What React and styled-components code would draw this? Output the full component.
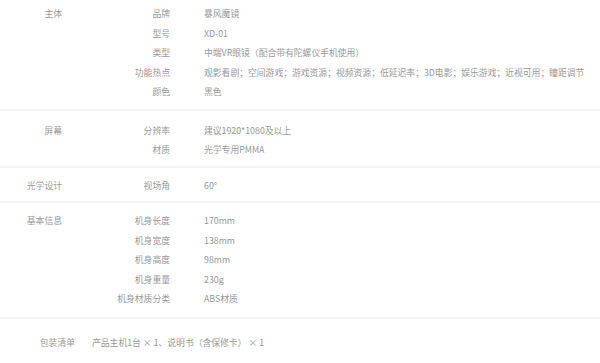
import { Fragment } from "react";
import styled, { createGlobalStyle } from "styled-components";

const GlobalStyle = createGlobalStyle`
  html, body {
    margin: 0;
    padding: 0;
    background: #ffffff;
  }
  body {
    font-family: "Noto Sans CJK SC", "Noto Sans", sans-serif;
    font-size: 8.8px;
    color: #999999;
  }
`;

const Page = styled.div`
  width: 600px;
  height: 363px;
  overflow: hidden;
  background: #fff;
`;

const Section = styled.section`
  display: grid;
  grid-template-columns: 62px 1fr;
  padding: ${(p) => p.pad || "8px 0 7px"};
  border-bottom: 2px solid #f3f3f3;
`;

const GroupName = styled.div`
  text-align: right;
  line-height: 19.5px;
  color: #999;
`;

const Rows = styled.dl`
  display: grid;
  grid-template-columns: 108px 1fr;
  column-gap: 34px;
  margin: 0;
`;

const Key = styled.dt`
  text-align: right;
  line-height: 19.5px;
  color: #999;
  white-space: nowrap;
`;

const Value = styled.dd`
  margin: 0;
  line-height: 19.5px;
  color: #999;
  white-space: nowrap;
`;

const PackRow = styled.div`
  display: flex;
  gap: 17px;
  padding: 14px 0 0;
  line-height: 19.5px;
`;

const PackLabel = styled.div`
  width: 75px;
  text-align: right;
  color: #999;
`;

const PackValue = styled.div`
  color: #999;
`;

const specs = [
  {
    name: "主体",
    pad: "4px 0 7px",
    rows: [
      ["品牌", "暴风魔镜"],
      ["型号", "XD-01"],
      ["类型", "中端VR眼镜（配合带有陀螺仪手机使用）"],
      [
        "功能热点",
        "观影看剧；空间游戏；游戏资源；视频资源；低延迟率；3D电影；娱乐游戏；近视可用；瞳距调节",
      ],
      ["颜色", "黑色"],
    ],
  },
  {
    name: "屏幕",
    pad: "10px 0 6px",
    rows: [
      ["分辨率", "建议1920*1080及以上"],
      ["材质", "光学专用PMMA"],
    ],
  },
  {
    name: "光学设计",
    pad: "8px 0 6px",
    rows: [["视场角", "60°"]],
  },
  {
    name: "基本信息",
    pad: "8px 0 8px",
    rows: [
      ["机身长度", "170mm"],
      ["机身宽度", "138mm"],
      ["机身高度", "98mm"],
      ["机身重量", "230g"],
      ["机身材质分类", "ABS材质"],
    ],
  },
];

export default function App() {
  return (
    <Page>
      <GlobalStyle />
      {specs.map((s) => (
        <Section key={s.name} pad={s.pad}>
          <GroupName>{s.name}</GroupName>
          <Rows>
            {s.rows.map(([k, v]) => (
              <Fragment key={k}>
                <Key>{k}</Key>
                <Value>{v}</Value>
              </Fragment>
            ))}
          </Rows>
        </Section>
      ))}
      <PackRow>
        <PackLabel>包装清单</PackLabel>
        <PackValue>产品主机1台 × 1、说明书（含保修卡） × 1</PackValue>
      </PackRow>
    </Page>
  );
}
